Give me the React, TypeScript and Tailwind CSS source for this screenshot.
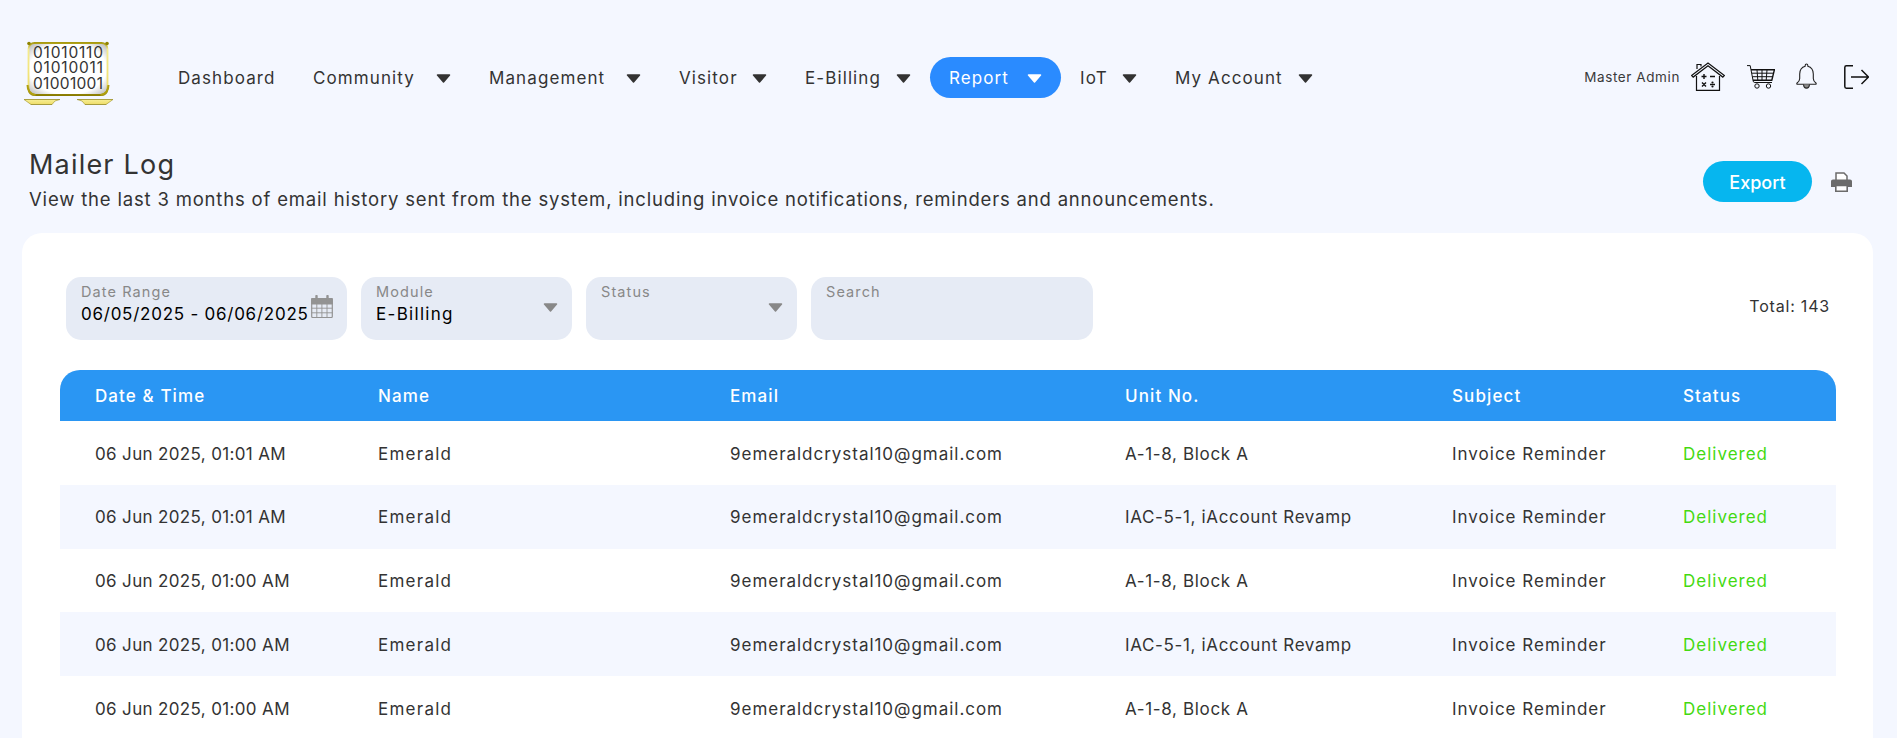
import React from 'react';

const Caret = ({ className = 'w-[15px] h-[9px] text-[#333]' }: { className?: string }) => (
  <svg viewBox="0 0 15 9" className={className}>
    <path d="M1.5 1h12L7.5 8z" fill="currentColor" stroke="currentColor" strokeWidth="1.5" strokeLinejoin="round" />
  </svg>
);

const Logo = () => (
  <svg viewBox="0 0 89 65" className="w-[89px] h-[65px] mt-[-9px]">
    <defs>
      <linearGradient id="gold" x1="0" y1="0" x2="0" y2="1">
        <stop offset="0" stopColor="#a89a10" />
        <stop offset="0.12" stopColor="#f5ec90" />
        <stop offset="0.8" stopColor="#f0e070" />
        <stop offset="1" stopColor="#8a7c00" />
      </linearGradient>
      <radialGradient id="glass" cx="0.5" cy="0.5" r="0.72">
        <stop offset="0.68" stopColor="#ffffff" />
        <stop offset="1" stopColor="#a8a8a8" />
      </radialGradient>
    </defs>
    <rect x="4.5" y="2" width="79" height="52" rx="6" fill="url(#glass)" stroke="url(#gold)" strokeWidth="1.8" />
    <path d="M3.5 44c0 6 3 9 8 10M84.5 44c0 6-3 9-8 10" fill="none" stroke="#b0a010" strokeWidth="2" />
    <circle cx="5" cy="2.5" r="1.8" fill="#8f8300" />
    <circle cx="83" cy="2.5" r="1.8" fill="#8f8300" />
    <g fontFamily="Inter, sans-serif" fontSize="15.5" fill="#333">
      <text x="9" y="16.5" textLength="70">01010110</text>
      <text x="9" y="32" textLength="70">01010011</text>
      <text x="9" y="47.5" textLength="70">01001001</text>
    </g>
    <path d="M0 58.5h36l-5 1.5-3 3.5H7zM89 58.5H53l5 1.5 3 3.5h21z" fill="url(#gold)" stroke="#8a7c00" strokeWidth=".5" />
  </svg>
);

const HouseIcon = () => (
  <svg viewBox="0 0 34 29" className="w-[34px] h-[29px] ml-[11px]" fill="none" stroke="#111" strokeWidth="1.2">
    <path d="M.6 13.5 17 1l16.4 12.5-1.6 1.6L17 3.8 2.2 15.1z" />
    <path d="M6 7V2.5h4V4.4" />
    <path d="M5.5 14v14.4h23V14" />
    <path d="M10.5 14.5h5M13 12v5M19 14.5h5" strokeWidth="1.4" />
    <path d="m11 20.5 4 4M15 20.5l-4 4M19 22.5h5" strokeWidth="1.4" />
    <circle cx="21.5" cy="20.5" r=".5" fill="#111" />
    <circle cx="21.5" cy="24.5" r=".5" fill="#111" />
  </svg>
);

const CartIcon = () => (
  <svg viewBox="0 0 28 24" className="w-[28px] h-[24px] ml-[22px]" fill="none" stroke="#111" strokeWidth="1">
    <path d="M0 .6h3.2l3 15.6c.2.9.8 1.3 1.6 1.3H25" />
    <path d="M4 4.8h23.4l-2.6 10.4H6" strokeWidth="1.4" />
    <path d="M4.8 8.2h22M5.4 11.7h20.6M10 4.8l.8 10.4M15 4.8v10.4M20 4.8l-.8 10.4" />
    <circle cx="10" cy="21" r="2.2" />
    <circle cx="21.5" cy="21" r="2.2" />
  </svg>
);

const BellIcon = () => (
  <svg viewBox="0 0 21 26" className="w-[21px] h-[26px] ml-[21px] mt-[-2px]" fill="none" stroke="#222" strokeWidth="1.1">
    <path d="M10.5 1c-.8 0-1.3.5-1.3 1.3v.9C5.5 4.2 3.7 7.3 3.7 11v4.5c0 2-1 3.3-2.6 4.5-.5.4-.4 1.3.4 1.3h18c.8 0 .9-.9.4-1.3-1.6-1.2-2.6-2.5-2.6-4.5V11c0-3.7-1.8-6.8-5.5-7.8v-.9c0-.8-.5-1.3-1.3-1.3z" />
    <path d="M7.6 21.5c0 2.2 1.2 3.6 2.9 3.6s2.9-1.4 2.9-3.6" fill="#8a8a8a" />
  </svg>
);

const LogoutIcon = () => (
  <svg viewBox="0 0 25 24" className="w-[25px] h-[24px] ml-[27px]" fill="none" stroke="#111" strokeWidth="1.5">
    <path d="M9 .8H2.4C1.3.8.8 1.3.8 2.4v19.2c0 1.1.5 1.6 1.6 1.6H9" />
    <path d="M7 12h17M17.5 5l7 7-7 7" />
  </svg>
);

const PrinterIcon = () => (
  <svg viewBox="0 0 21 20" className="w-[21px] h-[20px] ml-[19px]">
    <path d="M5 8V1h8l3 3v4" fill="#fff" stroke="#6b6b6b" strokeWidth="1.5" />
    <path d="M2 7.5h17c1.2 0 2 .8 2 2V15h-4v-2H4v2H0V9.5c0-1.2.8-2 2-2z" fill="#6b6b6b" />
    <path d="M4.8 13.5h11.4v5.7H4.8z" fill="#fff" stroke="#6b6b6b" strokeWidth="1.6" />
  </svg>
);

const CalendarIcon = () => (
  <svg viewBox="0 0 22 23" className="w-[22px] h-[23px] shrink-0" fill="none" stroke="#939393">
    <rect x=".7" y="3.5" width="20.6" height="19" rx="1" strokeWidth="1.2" />
    <path d="M.7 3.5h20.6V9H.7z" fill="#939393" />
    <path d="M5.5 1v5M16.5 1v5" strokeWidth="2.4" strokeLinecap="round" />
    <path d="M.7 13.2h20.6M.7 17.8h20.6M5.8 9v13M10.9 9v13M16 9v13" strokeWidth=".9" />
  </svg>
);

const navItems = [
  { label: 'Community', width: 'w-[176px]' },
  { label: 'Management', width: 'w-[190px]' },
  { label: 'Visitor', width: 'w-[126px]' },
  { label: 'E-Billing', width: 'w-[144px]' },
  { label: 'Report', width: 'w-[131px]', active: true },
  { label: 'IoT', width: 'w-[95px]' },
  { label: 'My Account', width: 'w-[176px]' },
];

const rows = [
  { time: '06 Jun 2025, 01:01 AM', unit: 'A-1-8, Block A' },
  { time: '06 Jun 2025, 01:01 AM', unit: 'IAC-5-1, iAccount Revamp' },
  { time: '06 Jun 2025, 01:00 AM', unit: 'A-1-8, Block A' },
  { time: '06 Jun 2025, 01:00 AM', unit: 'IAC-5-1, iAccount Revamp' },
  { time: '06 Jun 2025, 01:00 AM', unit: 'A-1-8, Block A' },
];

export default function App() {
  return (
    <div className="h-screen overflow-hidden bg-[#f4f7ff] text-[#333] font-['Inter',sans-serif]">
      <header className="h-[130px] pt-[25px] pl-6 pr-[28px] flex items-center">
        <Logo />
        <nav className="flex items-center ml-[46px] text-[17px] tracking-[1.1px]">
          <a className="h-[41px] w-[135px] px-[19px] pt-[2px] flex items-center">Dashboard</a>
          {navItems.map(n => (
            <a
              key={n.label}
              className={`h-[41px] px-[19px] pt-[2px] flex items-center justify-between rounded-full ${n.width} ${n.active ? 'bg-[#2a8bff] text-white' : ''}`}
            >
              {n.label}
              <Caret className={n.active ? 'w-[15px] h-[9px] text-white' : 'w-[15px] h-[9px] text-[#333]'} />
            </a>
          ))}
        </nav>
        <div className="ml-auto flex items-center mb-[2px]">
          <span className="text-[13.5px] tracking-[0.6px] text-[#3a3a3a] mt-[2px]">Master Admin</span>
          <HouseIcon />
          <CartIcon />
          <BellIcon />
          <LogoutIcon />
        </div>
      </header>

      <section className="flex justify-between pl-[29px] pr-[45px] h-[103px]">
        <div className="pt-[18px]">
          <h1 className="text-[27px] leading-[34px] tracking-[1.2px]">Mailer Log</h1>
          <p className="text-[18.5px] leading-6 mt-[5px] tracking-[0.82px]">
            View the last 3 months of email history sent from the system, including invoice notifications, reminders and announcements.
          </p>
        </div>
        <div className="flex items-center h-[41px] mt-[31px]">
          <button className="w-[109px] h-[41px] pt-px rounded-full bg-[#06b6ef] text-white text-[18px] font-medium">Export</button>
          <PrinterIcon />
        </div>
      </section>

      <main className="ml-[22px] mr-[24px] bg-white rounded-t-[20px] pt-[44px] px-[38px] pb-8">
        <div className="flex items-center pl-[6px] pr-[5px] gap-[14px]">
          <div className="w-[281px] h-[63px] rounded-[15px] bg-[#e6ebf5] pl-[15px] pr-[14px] pt-[5px] flex justify-between">
            <div>
              <div className="text-[14.5px] leading-5 text-[#888] tracking-[1.1px]">Date Range</div>
              <div className="text-[17px] leading-[23px] mt-px text-black tracking-[0.75px] whitespace-nowrap">06/05/2025 - 06/06/2025</div>
            </div>
            <div className="pt-[13px] -ml-2"><CalendarIcon /></div>
          </div>
          <div className="w-[211px] h-[63px] rounded-[15px] bg-[#e6ebf5] pl-[15px] pr-[14px] pt-[5px] flex justify-between">
            <div>
              <div className="text-[14.5px] leading-5 text-[#888] tracking-[1.1px]">Module</div>
              <div className="text-[17px] leading-[23px] mt-px text-black tracking-[1.3px]">E-Billing</div>
            </div>
            <div className="pt-[21px]"><Caret className="w-[15px] h-[9px] text-[#888]" /></div>
          </div>
          <div className="w-[211px] h-[63px] rounded-[15px] bg-[#e6ebf5] pl-[15px] pr-[14px] pt-[5px] flex justify-between">
            <div className="text-[14.5px] leading-5 text-[#888] tracking-[1.1px]">Status</div>
            <div className="pt-[21px]"><Caret className="w-[15px] h-[9px] text-[#888]" /></div>
          </div>
          <div className="w-[282px] h-[63px] rounded-[15px] bg-[#e6ebf5] pl-[15px] pt-[5px]">
            <div className="text-[14.5px] leading-5 text-[#888] tracking-[1.1px]">Search</div>
          </div>
          <div className="ml-auto text-[16px] tracking-[0.8px] -mt-[5px]">Total: 143</div>
        </div>

        <table className="w-[1776px] mt-[30px] table-fixed text-left text-[17px]">
          <colgroup>
            <col className="w-[318px]" />
            <col className="w-[352px]" />
            <col className="w-[395px]" />
            <col className="w-[327px]" />
            <col className="w-[231px]" />
            <col className="w-[153px]" />
          </colgroup>
          <thead className="bg-[#2a96f3] text-white tracking-[1.1px]">
            <tr className="h-[51px]">
              <th className="pl-[35px] pt-[2px] font-medium rounded-tl-[20px]">Date &amp; Time</th>
              <th className="pt-[2px] font-medium">Name</th>
              <th className="pt-[2px] font-medium">Email</th>
              <th className="pt-[2px] font-medium">Unit No.</th>
              <th className="pt-[2px] font-medium">Subject</th>
              <th className="pt-[2px] font-medium rounded-tr-[20px]">Status</th>
            </tr>
          </thead>
          <tbody>
            {rows.map((r, i) => (
              <tr key={i} className={`h-[63.75px] ${i % 2 === 1 ? 'bg-[#f4f7ff]' : 'bg-white'}`}>
                <td className="pl-[35px] pt-[3px] tracking-[0.35px]">{r.time}</td>
                <td className="pt-[3px] tracking-[1.25px]">Emerald</td>
                <td className="pt-[3px] tracking-[0.97px]">9emeraldcrystal10@gmail.com</td>
                <td className="pt-[3px] tracking-[0.65px]">{r.unit}</td>
                <td className="pt-[3px] tracking-[1px]">Invoice Reminder</td>
                <td className="pt-[3px] text-[#44d911] tracking-[1px]">Delivered</td>
              </tr>
            ))}
          </tbody>
        </table>
      </main>
    </div>
  );
}
